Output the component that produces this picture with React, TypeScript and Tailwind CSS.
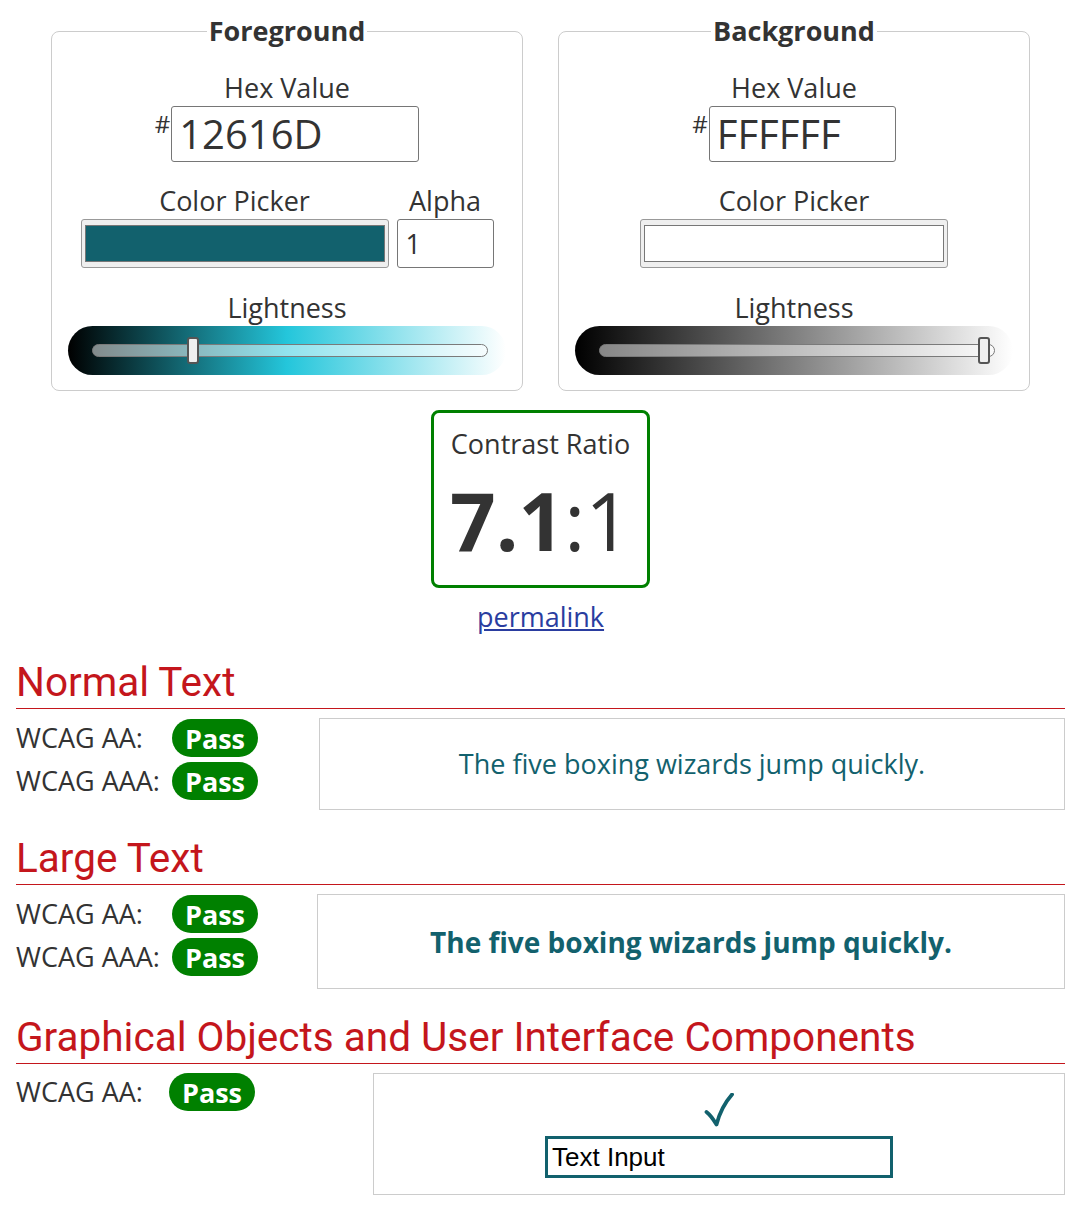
const Pass = () => (
  <span className="flex h-[38px] w-[86px] items-center justify-center rounded-full bg-[#008000] text-[27px] font-bold leading-none text-white">
    Pass
  </span>
)

type PanelProps = {
  title: string
  hex: string
  hexWidth: string
  swatch: string
  alpha?: boolean
  gradient: string
  thumb: string
}

const Panel = ({ title, hex, hexWidth, swatch, alpha, gradient, thumb }: PanelProps) => {
  return (
    <fieldset className="w-[472px] rounded-lg border border-[#ccc] pb-[15px]">
      <legend className="mx-auto px-[2px] text-[27px] font-bold leading-[36px] text-[#333]">{title}</legend>

      <div className="mt-[21px] text-center text-[27px] leading-[36px]">Hex Value</div>
      <div className="flex justify-center">
        <span className="mr-[1px] text-[24px] leading-[36px]">#</span>
        <div className={`flex h-[56px] items-center rounded-[3px] border border-[#767676] pl-[7px] text-[40px] leading-none ${hexWidth}`}>
          {hex}
        </div>
      </div>

      <div className="mt-[21px] flex justify-center gap-2">
        <div className="flex flex-col items-center">
          <span className="text-[27px] leading-[36px]">Color Picker</span>
          <div className="flex h-[49px] w-[308px] items-center rounded-[3px] border border-[#999] bg-[#efefef] px-[3px]">
            <div className={`h-[37px] w-full border border-[#777] ${swatch}`} />
          </div>
        </div>
        {alpha && (
          <div className="flex flex-col items-center">
            <span className="text-[27px] leading-[36px]">Alpha</span>
            <div className="flex h-[49px] w-[97px] items-center rounded-[3px] border border-[#767676] pl-[8px] text-[27px] leading-none">
              1
            </div>
          </div>
        )}
      </div>

      <div className="mt-[22px] text-center text-[27px] leading-[36px]">Lightness</div>
      <div className={`mx-4 flex h-[49px] items-center rounded-full pl-6 pr-[18px] ${gradient}`}>
        <div className="relative h-[13px] flex-1 rounded-full border border-[#7a7a7a] bg-white/50">
          <div className={`absolute top-[-8px] h-[27px] w-[12px] rounded-[3px] border-2 border-[#555] bg-[#efefef] ${thumb}`} />
        </div>
      </div>
    </fieldset>
  )
}

const Check = () => (
  <svg width="30" height="34" viewBox="0 0 30 34" fill="none">
    <path
      d="M2.5 19 Q7 22.5 12.5 31.5 Q17 14 28 1.5"
      stroke="#12616D"
      strokeWidth="3.8"
      strokeLinecap="round"
      strokeLinejoin="round"
    />
  </svg>
)

const Heading = ({ children, gap }: { children: React.ReactNode; gap: string }) => (
  <div className={gap}>
    <h2 className="font-['Roboto',sans-serif] text-[40.5px] leading-[48px] text-[#c4161c]">{children}</h2>
    <div className="mt-[2px] h-px bg-[#c4161c]" />
  </div>
)

export default function App() {
  return (
    <div className="min-h-screen bg-white pl-4 pr-1 pt-[13px] font-['Open_Sans',sans-serif] text-[#333]">
      <div className="flex justify-center gap-[35px]">
        <Panel
          title="Foreground"
          hex="12616D"
          hexWidth="w-[248px]"
          swatch="bg-[#12616D]"
          alpha
          gradient="bg-[linear-gradient(to_right,#000,#24c6db_50%,#fff)]"
          thumb="left-[94px]"
        />
        <Panel
          title="Background"
          hex="FFFFFF"
          hexWidth="w-[187px]"
          swatch="bg-white"
          gradient="bg-[linear-gradient(to_right,#000,#808080_50%,#fff)]"
          thumb="left-[378px]"
        />
      </div>

      <div className="mx-auto mt-[19px] flex h-[178px] w-[219px] flex-col items-center rounded-lg border-[3px] border-[#008000] pt-[13px]">
        <span className="text-[27px] leading-[36px]">Contrast Ratio</span>
        <span className="mt-[18px] text-[80px] leading-none">
          <b className="font-bold">7.1</b>:1
        </span>
      </div>
      <div className="mt-[11px] text-center text-[27px] leading-[36px]">
        <a href="#" className="text-[#2a3da0] underline">permalink</a>
      </div>

      <Heading gap="mt-[23px]">Normal Text</Heading>
      <div className="mt-[9px] flex">
        <div className="flex w-[303px] flex-col gap-[5px] pt-[1px]">
          <div className="flex items-center">
            <span className="w-[156px] text-[27px] leading-[38px]">WCAG AA:</span>
            <Pass />
          </div>
          <div className="flex items-center">
            <span className="w-[156px] text-[27px] leading-[38px]">WCAG AAA:</span>
            <Pass />
          </div>
        </div>
        <div className="flex h-[92px] flex-1 items-center justify-center border border-[#ccc] text-[27px] text-[#12616D]">
          The five boxing wizards jump quickly.
        </div>
      </div>

      <Heading gap="mt-[24px]">Large Text</Heading>
      <div className="mt-[9px] flex">
        <div className="flex w-[301px] flex-col gap-[5px] pt-[1px]">
          <div className="flex items-center">
            <span className="w-[156px] text-[27px] leading-[38px]">WCAG AA:</span>
            <Pass />
          </div>
          <div className="flex items-center">
            <span className="w-[156px] text-[27px] leading-[38px]">WCAG AAA:</span>
            <Pass />
          </div>
        </div>
        <div className="flex h-[95px] flex-1 items-center justify-center border border-[#ccc] text-[28px] font-bold text-[#12616D]">
          The five boxing wizards jump quickly.
        </div>
      </div>

      <Heading gap="mt-[24px]">Graphical Objects and User Interface Components</Heading>
      <div className="mt-[9px] flex pb-4">
        <div className="flex w-[357px] items-start">
          <div className="flex items-center">
            <span className="w-[153px] text-[27px] leading-[38px]">WCAG AA:</span>
            <Pass />
          </div>
        </div>
        <div className="flex h-[122px] flex-1 flex-col items-center border border-[#ccc] pt-[19px]">
          <Check />
          <div className="mt-[9px] flex h-[42px] w-[348px] items-center border-[3px] border-[#12616D] pl-[4px] font-['Liberation_Sans',Arial,sans-serif] text-[26px] leading-none text-black">
            Text Input
          </div>
        </div>
      </div>
    </div>
  )
}
